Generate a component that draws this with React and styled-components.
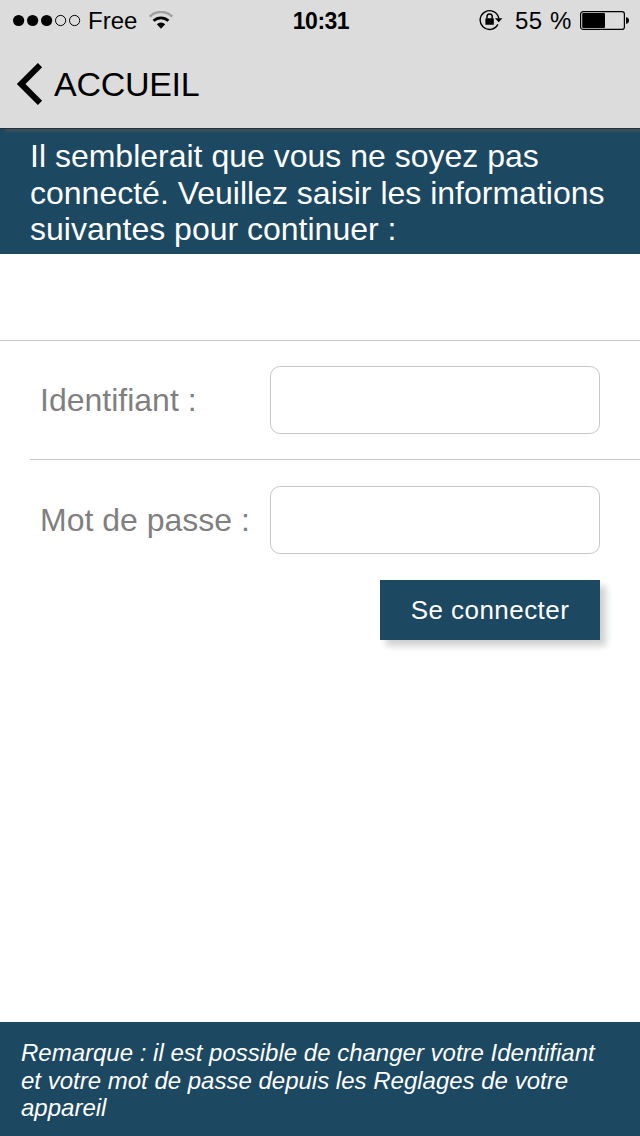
import React from "react";
import styled, { createGlobalStyle } from "styled-components";

const Global = createGlobalStyle`
  * { box-sizing: border-box; }
  body { margin: 0; background: #fff; font-family: "Liberation Sans", Arial, sans-serif; }
`;
const Screen = styled.div`
  width: 640px; height: 1136px; display: flex; flex-direction: column; background: #fff; overflow: hidden;
`;
const TopBar = styled.header`
  position: relative; height: 128px; flex: none; background: #dcdcdc; color: #000;
  box-shadow: 0 1px 0 #22323d, 5px 4px 2px #3b505c;
`;
const Status = styled.div`
  height: 40px; display: grid; grid-template-columns: 1fr auto 1fr; align-items: center;
  padding: 0 11px 0 13px; font-size: 24px; line-height: 28px;
`;
const Side = styled.div`
  display: flex; align-items: center; justify-content: ${p => (p.$end ? "flex-end" : "flex-start")};
`;
const Glyph = styled.svg`display: block; flex: none; margin-left: ${p => p.$gap || 0}px;`;
const Text = styled.span`
  display: block; white-space: nowrap; padding-top: ${p => p.$drop || 0}px;
  letter-spacing: ${p => p.$track || 0}px; margin-left: ${p => p.$gap || 0}px;
`;
const Clock = styled(Text)`font-size: 23px; font-weight: 700;`;
const Nav = styled.nav`
  height: 87px; display: flex; align-items: center; padding-left: 16px; gap: 11px;
  font-size: 34px; line-height: 40px;
`;
const Intro = styled.section`
  height: 126px; flex: none; background: #1c4861; color: #fff; padding: 10px 30px; font-size: 32px; line-height: 36.5px;
`;
const Form = styled.form`
  margin-top: 86px; border-top: 1px solid #c8c7cc; color: #7f7f7f; font-size: 32px; line-height: 36px;
`;
const Row = styled.label`
  display: flex; align-items: center; justify-content: space-between; height: ${p => p.$height}px; padding: 0 40px;
`;
const Divider = styled.div`height: 1px; margin-left: 30px; background: #c8c8c8;`;
const Input = styled.input`
  width: 330px; height: 68px; border: 1px solid #c8c8c8; border-radius: 10px; background: #fff; padding: 0 14px; font: inherit;
`;
const Button = styled.button`
  display: flex; align-items: center; justify-content: center; width: 220px; height: 60px; margin: 0 40px 0 auto;
  border: 0; padding: 0; background: #1c4861; color: #fff; font-family: inherit; font-size: 26px; line-height: 30px;
  letter-spacing: 0.45px; box-shadow: 6px 6px 7px #d0d0d0;
`;
const Note = styled.footer`
  margin-top: auto; height: 114px; background: #1c4861; color: #fff; padding: 17px 21px;
  font-size: 24px; line-height: 27.5px; font-style: italic;
`;

const Signal = () => (
  <Glyph width="68" height="14" viewBox="0 0 68 14">
    {[0, 1, 2, 3, 4].map(i => (
      <circle key={i} cx={5.6 + i * 14} cy="7.5" r={i < 3 ? 5.6 : 5.1} fill={i < 3 ? "#000" : "none"} stroke={i < 3 ? "none" : "#000"} />
    ))}
  </Glyph>
);
const Wifi = () => (
  <Glyph $gap={12} width="24" height="18" viewBox="0 0 24 18" fill="none">
    <path d="M.8 5.6a16 16 0 0 1 22.4 0" stroke="#a0a0a0" strokeWidth="2.6" />
    <path d="M4.6 9.8a10.6 10.6 0 0 1 14.8 0" stroke="#000" strokeWidth="2.8" />
    <path d="M7.8 13.2a6 6 0 0 1 8.4 0L12 17.8z" fill="#000" />
  </Glyph>
);
const RotationLock = () => (
  <Glyph width="24" height="22" viewBox="0 0 24 22" fill="none" stroke="#000">
    <path d="M18.9 15.4A9.4 9.4 0 1 1 19.8 9.4" strokeWidth="1.4" />
    <path d="M16 9.3h7.4l-3.7 4z" fill="#000" stroke="none" />
    <rect x="6.4" y="9.2" width="8.4" height="6.6" rx=".5" fill="#000" stroke="none" />
    <path d="M8 9.6V7.6a2.6 2.6 0 0 1 5.2 0V9.6" strokeWidth="1.5" />
  </Glyph>
);
const Battery = () => (
  <Glyph $gap={8} width="49" height="19" viewBox="0 0 49 19">
    <rect x=".6" y=".6" width="43.8" height="17.8" rx="2.5" fill="none" stroke="#000" strokeWidth="1.2" />
    <rect x="2.2" y="2" width="22.8" height="15" rx="1" />
    <path d="M46 6.2q3 .2 3 3.3t-3 3.3z" />
  </Glyph>
);
const Back = () => (
  <Glyph width="27" height="42" viewBox="0 0 27 42">
    <path d="M24 2.2 5.1 21 24 39.8" fill="none" stroke="#000" strokeWidth="6" />
  </Glyph>
);

export default function App() {
  return (
    <Screen>
      <Global />
      <TopBar>
        <Status>
          <Side><Signal /><Text $gap={7} $drop={2}>Free</Text><Wifi /></Side>
          <Clock $drop={2} $track={-0.5}>10:31</Clock>
          <Side $end><RotationLock /><Text $gap={12} $drop={2} $track={0.6}>55 %</Text><Battery /></Side>
        </Status>
        <Nav><Back /><Text $track={-0.3}>ACCUEIL</Text></Nav>
      </TopBar>
      <Intro>
        <Text>Il semblerait que vous ne soyez pas</Text>
        <Text>connecté. Veuillez saisir les informations</Text>
        <Text>suivantes pour continuer :</Text>
      </Intro>
      <Form>
        <Row $height={118}><Text>Identifiant :</Text><Input type="text" /></Row>
        <Divider />
        <Row $height={120}><Text>Mot de passe :</Text><Input type="password" /></Row>
        <Button type="button">Se connecter</Button>
      </Form>
      <Note>
        <Text>Remarque : il est possible de changer votre Identifiant</Text>
        <Text>et votre mot de passe depuis les Reglages de votre</Text>
        <Text>appareil</Text>
      </Note>
    </Screen>
  );
}
